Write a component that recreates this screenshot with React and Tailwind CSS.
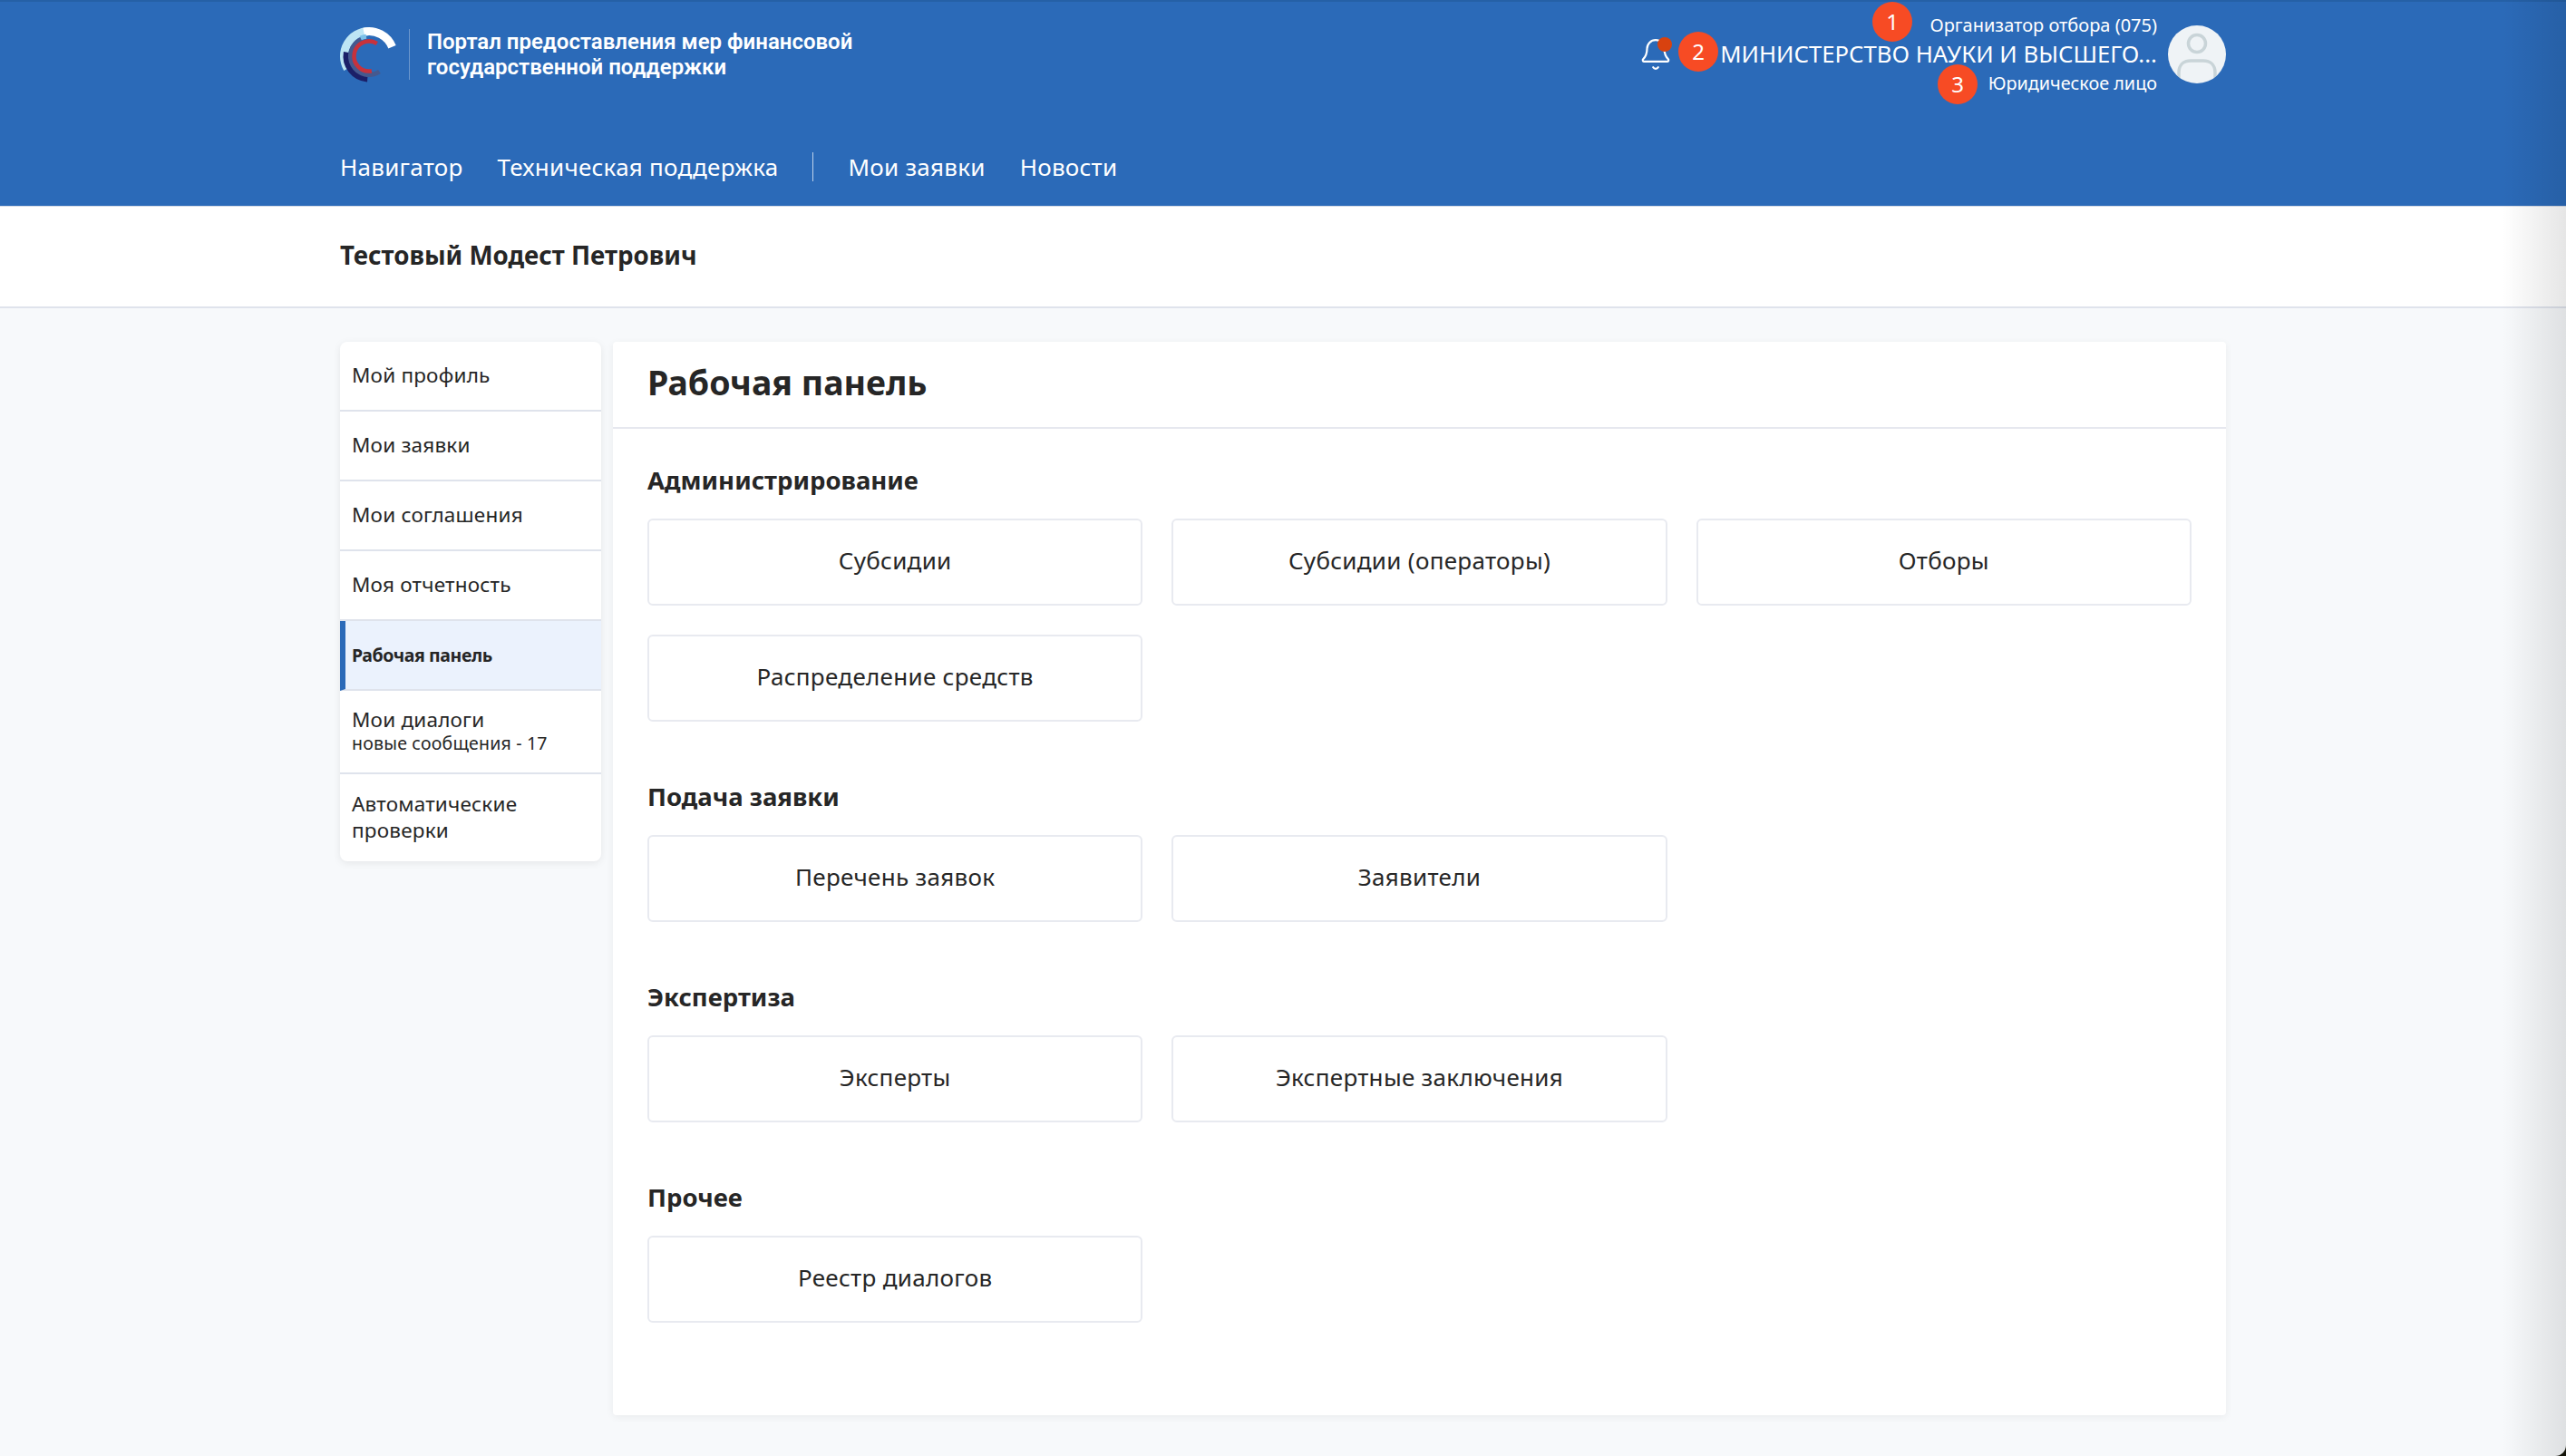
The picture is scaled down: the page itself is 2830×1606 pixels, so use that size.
import { Bell } from "lucide-react";

const sidebarItems = [
  { label: "Мой профиль" },
  { label: "Мои заявки" },
  { label: "Мои соглашения" },
  { label: "Моя отчетность" },
  { label: "Рабочая панель", active: true },
  { label: "Мои диалоги", sub: "новые сообщения - 17" },
  { label: "Автоматические проверки" },
];

const sections = [
  { title: "Администрирование", items: ["Субсидии", "Субсидии (операторы)", "Отборы", "Распределение средств"] },
  { title: "Подача заявки", items: ["Перечень заявок", "Заявители"] },
  { title: "Экспертиза", items: ["Эксперты", "Экспертные заключения"] },
  { title: "Прочее", items: ["Реестр диалогов"] },
];

// кольцевой сегмент логотипа, углы по часовой от 12 часов
const arc = (r, from, to) => {
  const pt = (a) => {
    const rad = (a * Math.PI) / 180;
    return `${(36 + r * Math.sin(rad)).toFixed(2)} ${(36 - r * Math.cos(rad)).toFixed(2)}`;
  };
  const large = to - from > 180 ? 1 : 0;
  return `M${pt(from)} A${r} ${r} 0 ${large} 1 ${pt(to)}`;
};

const Logo = () => (
  <svg width="72" height="72" viewBox="0 0 72 72" fill="none" className="shrink-0 -ml-[4px] mt-[3px]">
    <path d={arc(27.5, 240, 360)} stroke="#bde5f4" strokeWidth="9" />
    <path d={arc(27.5, -12, 68)} stroke="#ffffff" strokeWidth="9" />
    <path d={arc(25, 184, 280)} stroke="#1b1f68" strokeWidth="7" />
    <path d={arc(20.5, 146, 335)} stroke="#45598f" strokeWidth="5" />
    <path d={arc(22, 335, 352)} stroke="#7cc0e8" strokeWidth="5" />
    <path d={arc(16.5, 170, 392)} stroke="#c7323c" strokeWidth="4.5" />
  </svg>
);

const Avatar = () => (
  <div className="w-16 h-16 rounded-full bg-[#eff3f6] overflow-hidden shrink-0">
    <svg width="64" height="64" viewBox="0 0 64 64" fill="none">
      <circle cx="32" cy="20" r="9.5" stroke="#c9d4d8" strokeWidth="3.5" />
      <path d="M12 60v-8c0-8 5-13 13-13h14c8 0 13 5 13 13v8" stroke="#c9d4d8" strokeWidth="3.5" />
    </svg>
  </div>
);

const Badge = ({ className, children }) => (
  <span
    className={`absolute w-11 h-11 rounded-full bg-[#f74b24] text-white text-[24px] leading-none flex items-center justify-center ${className}`}
  >
    {children}
  </span>
);

export default function App() {
  return (
    <div className="bg-[#14140a]">
      <div className="relative w-full min-h-screen overflow-hidden rounded-br-[12px] bg-[#f7f9fb] text-[#262626] font-['Noto_Sans',sans-serif]">
        {/* Header */}
        <header className="bg-[#2b6ab8] border-t-2 border-[#2560a6] border-b border-b-[#d5dbe6] text-white">
          <div className="w-[2080px] mx-auto">
            <div className="relative flex items-center justify-between h-[116px]">
              <div className="flex items-center">
                <Logo />
                <div className="w-px h-14 bg-white/30 ml-[8px] mr-[19px]" />
                <div className="text-[24px] leading-[28px] font-semibold font-['Roboto',sans-serif]">
                  Портал предоставления мер финансовой
                  <br />
                  государственной поддержки
                </div>
              </div>
              <div className="flex items-center gap-3">
                <div className="relative mr-[40px]">
                  <Bell size={38} strokeWidth={1.4} />
                  <span className="absolute top-0 right-[1px] w-4 h-4 rounded-full bg-[#d8420f]" />
                </div>
                <div className="flex flex-col items-end">
                  <div className="text-[20px] leading-[32px]">Организатор отбора (075)</div>
                  <div className="text-[25.7px] leading-[32px] whitespace-nowrap">МИНИСТЕРСТВО НАУКИ И ВЫСШЕГО...</div>
                  <div className="text-[19.8px] leading-[32px]">Юридическое лицо</div>
                </div>
                <Avatar />
                <Badge className="left-[1690px] top-0">1</Badge>
                <Badge className="left-[1476px] top-[33px]">2</Badge>
                <Badge className="left-[1762px] top-[69px]">3</Badge>
              </div>
            </div>
            <nav className="flex items-center gap-[38px] h-11 mt-11 mb-[21px] text-[26px] tracking-[0.25px]">
              <a>Навигатор</a>
              <a>Техническая поддержка</a>
              <span className="w-px h-8 bg-white/70" />
              <a>Мои заявки</a>
              <a>Новости</a>
            </nav>
          </div>
        </header>

        {/* Name band */}
        <div className="bg-white border-b-2 border-[#dfe3ec] h-[112px] pb-[2px]">
          <div className="w-[2080px] mx-auto h-full flex items-center text-[27.7px] font-bold">
            Тестовый Модест Петрович
          </div>
        </div>

        <div className="w-[2080px] mx-auto mt-[37px] flex items-start gap-[13px]">
          {/* Sidebar */}
          <aside className="w-[288px] shrink-0 bg-white rounded-lg shadow-[0_2px_8px_rgba(0,0,0,0.08)] overflow-hidden">
            {sidebarItems.map((item, i) => (
              <div
                key={item.label}
                className={`flex flex-col justify-center px-[13px] leading-[29px] ${
                  i < sidebarItems.length - 1 ? "border-b-2 border-[#dfe3ec]" : ""
                } ${
                  item.active
                    ? "bg-[#ebf2fd] border-l-[6px] border-l-[#2b6ab8] !pl-[7px] font-bold text-[19.5px] tracking-[-0.4px]"
                    : "text-[22.5px] tracking-[0.2px] pb-[3px]"
                } ${item.sub ? "h-[92px]" : i === 6 ? "h-[96px]" : "h-[77px]"}`}
              >
                {item.label}
                {item.sub && <span className="text-[19.5px] leading-[24px]">{item.sub}</span>}
              </div>
            ))}
          </aside>

          {/* Main panel */}
          <main className="w-[1779px] shrink-0 bg-white rounded shadow-[0_2px_8px_rgba(0,0,0,0.06)]">
            <div className="h-[96px] border-b-2 border-[#e6e8ef] flex items-center px-[38px] pb-[3px]">
              <h1 className="text-[37.5px] font-bold">Рабочая панель</h1>
            </div>
            <div className="pt-[39px] pb-[102px] px-[38px]">
              {sections.map((section, i) => (
                <section key={section.title} className={i > 0 ? "mt-[65px]" : ""}>
                  <h2 className="text-[27.5px] leading-[36px] font-bold mb-[24px]">{section.title}</h2>
                  <div className="grid grid-cols-3 gap-8">
                    {section.items.map((name) => (
                      <button
                        key={name}
                        className="h-[96px] pb-[3px] bg-white border-2 border-[#e8eaf0] rounded-md text-[26px] tracking-[0.3px]"
                      >
                        {name}
                      </button>
                    ))}
                  </div>
                </section>
              ))}
            </div>
          </main>
        </div>

        {/* Тень у правого края окна */}
        <div className="absolute top-0 right-0 bottom-0 w-[70px] bg-gradient-to-r from-transparent to-black/10 pointer-events-none" />
      </div>
    </div>
  );
}
